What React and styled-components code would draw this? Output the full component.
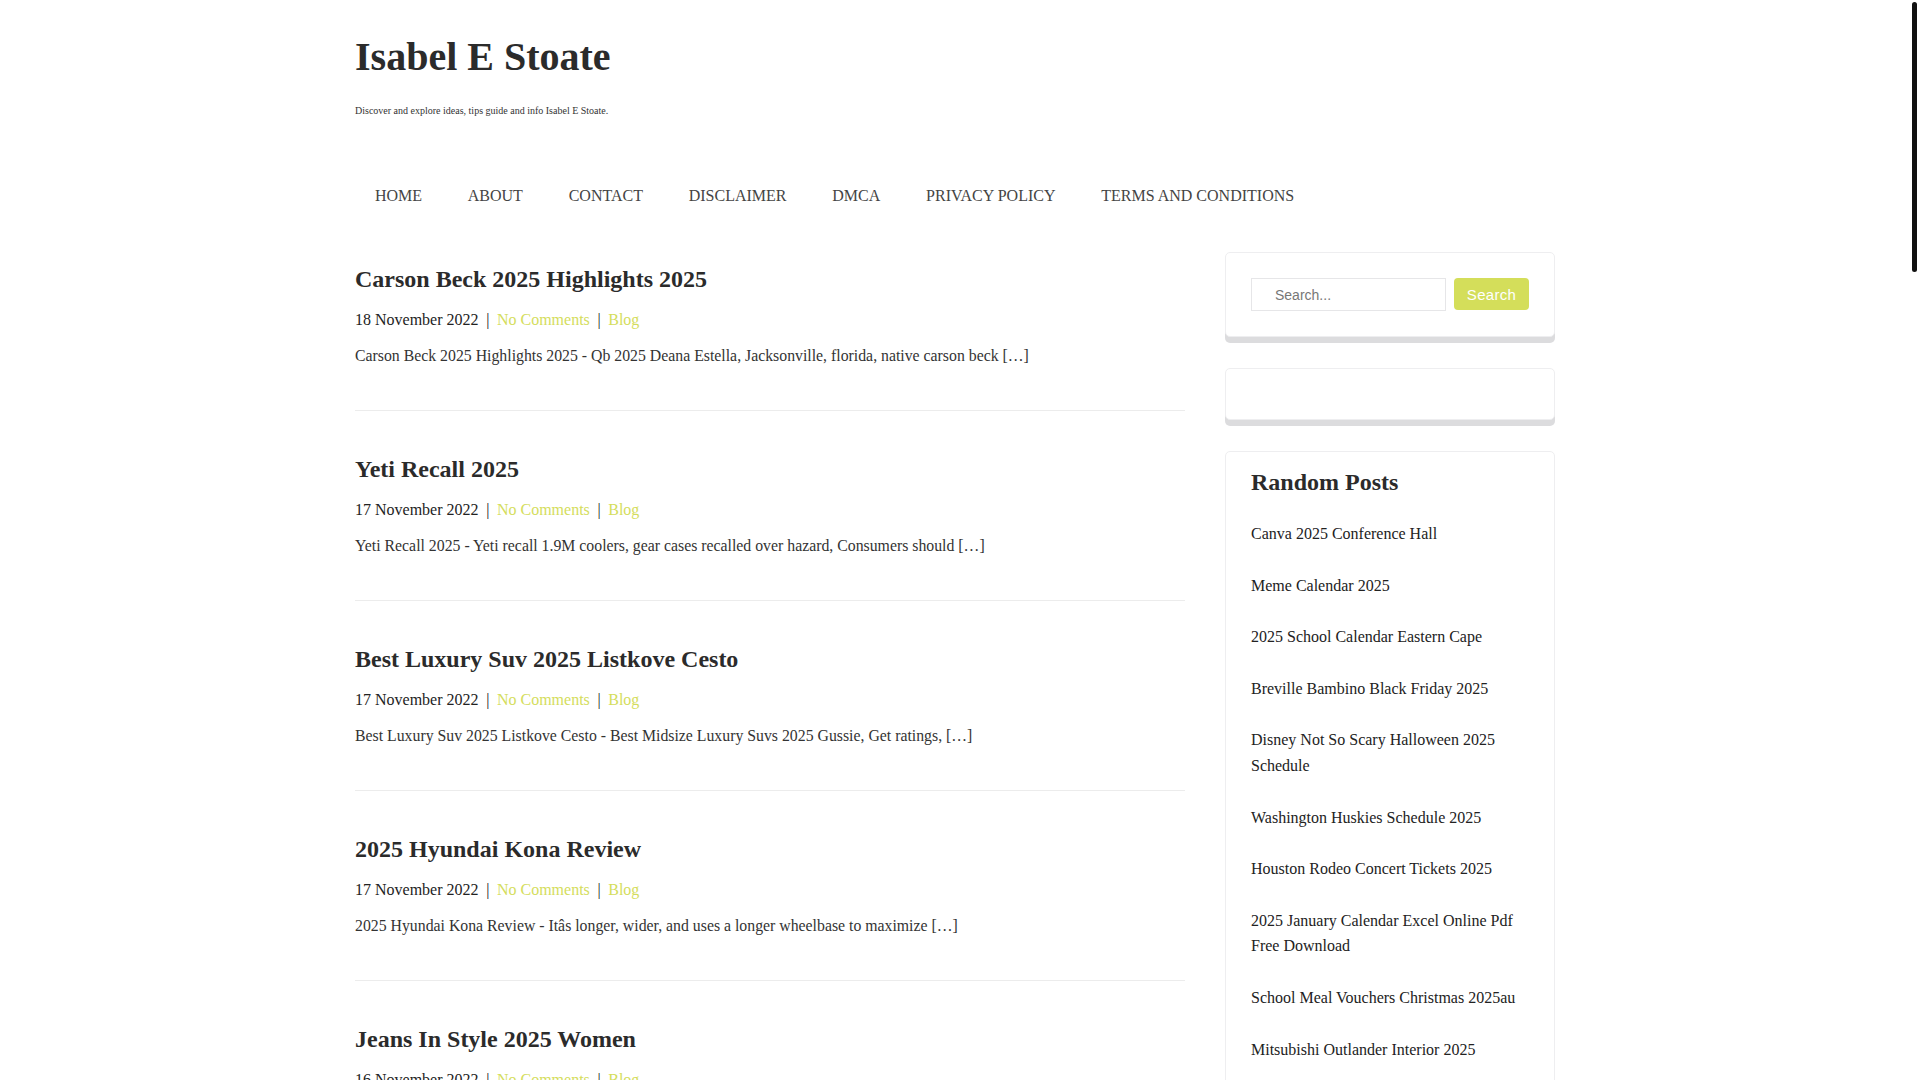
import React from "react";
import styled, { createGlobalStyle } from "styled-components";

const posts = [
  {
    title: "Carson Beck 2025 Highlights 2025",
    date: "18 November 2022",
    excerpt:
      "Carson Beck 2025 Highlights 2025 - Qb 2025 Deana Estella, Jacksonville, florida, native carson beck […]",
  },
  {
    title: "Yeti Recall 2025",
    date: "17 November 2022",
    excerpt:
      "Yeti Recall 2025 - Yeti recall 1.9M coolers, gear cases recalled over hazard, Consumers should […]",
  },
  {
    title: "Best Luxury Suv 2025 Listkove Cesto",
    date: "17 November 2022",
    excerpt:
      "Best Luxury Suv 2025 Listkove Cesto - Best Midsize Luxury Suvs 2025 Gussie, Get ratings, […]",
  },
  {
    title: "2025 Hyundai Kona Review",
    date: "17 November 2022",
    excerpt:
      "2025 Hyundai Kona Review - Itâs longer, wider, and uses a longer wheelbase to maximize […]",
  },
  {
    title: "Jeans In Style 2025 Women",
    date: "16 November 2022",
    excerpt:
      "Jeans In Style 2025 Women - Discover the latest denim trends, from wide leg to straight fits […]",
  },
  {
    title: "Cadillac Escalade 2025 Price",
    date: "16 November 2022",
    excerpt:
      "Cadillac Escalade 2025 Price - The full size luxury suv returns with new trims and features […]",
  },
  {
    title: "Nfl Draft Order 2025 Round 1",
    date: "16 November 2022",
    excerpt:
      "Nfl Draft Order 2025 Round 1 - See the complete first round order and every team pick […]",
  },
  {
    title: "Printable 2025 Calendar With Holidays",
    date: "15 November 2022",
    excerpt:
      "Printable 2025 Calendar With Holidays - Free monthly and yearly templates to download […]",
  },
];

const randomPosts = [
  "Canva 2025 Conference Hall",
  "Meme Calendar 2025",
  "2025 School Calendar Eastern Cape",
  "Breville Bambino Black Friday 2025",
  "Disney Not So Scary Halloween 2025 Schedule",
  "Washington Huskies Schedule 2025",
  "Houston Rodeo Concert Tickets 2025",
  "2025 January Calendar Excel Online Pdf Free Download",
  "School Meal Vouchers Christmas 2025au",
  "Mitsubishi Outlander Interior 2025",
  "Lsu Football Schedule 2025",
  "Chevy Silverado 2025 Changes",
];

const menu = [
  "HOME",
  "ABOUT",
  "CONTACT",
  "DISCLAIMER",
  "DMCA",
  "PRIVACY POLICY",
  "TERMS AND CONDITIONS",
];

export default function App() {
  return (
    <>
      <GlobalStyle />
      <ScrollThumb aria-hidden="true" />
      <Page>
        <Header>
          <SiteTitle>Isabel E Stoate</SiteTitle>
          <Tagline>
            Discover and explore ideas, tips guide and info Isabel E Stoate.
          </Tagline>
          <Nav>
            {menu.map((item) => (
              <NavLink key={item} href="#">
                {item}
              </NavLink>
            ))}
          </Nav>
        </Header>

        <Content>
          <Main>
            {posts.map((post) => (
              <Article key={post.title}>
                <PostTitle>{post.title}</PostTitle>
                <Meta>
                  <span>{post.date}</span>
                  <Sep>|</Sep>
                  <MetaLink href="#">No Comments</MetaLink>
                  <Sep>|</Sep>
                  <MetaLink href="#">Blog</MetaLink>
                </Meta>
                <Excerpt>{post.excerpt}</Excerpt>
              </Article>
            ))}
          </Main>

          <Sidebar>
            <Widget>
              <SearchForm onSubmit={(e) => e.preventDefault()}>
                <SearchInput type="text" placeholder="Search..." />
                <SearchButton type="submit">Search</SearchButton>
              </SearchForm>
            </Widget>
            <Widget />
            <Widget $compact>
              <WidgetTitle>Random Posts</WidgetTitle>
              <PostList>
                {randomPosts.map((p) => (
                  <PostItem key={p}>
                    <a href="#">{p}</a>
                  </PostItem>
                ))}
              </PostList>
            </Widget>
          </Sidebar>
        </Content>
      </Page>
    </>
  );
}

const GlobalStyle = createGlobalStyle`
  html {
    background: #fff;
    scrollbar-width: none;
  }
  html::-webkit-scrollbar {
    display: none;
  }
  body {
    margin: 0;
    padding-right: 10px;
    background: #fff;
    color: #333;
    font-family: "Liberation Serif", "Times New Roman", serif;
  }
  a {
    text-decoration: none;
    color: inherit;
  }
`;

/* thin page scrollbar thumb seen at the right edge */
const ScrollThumb = styled.div`
  position: fixed;
  top: 2px;
  right: 3px;
  width: 5px;
  height: 270px;
  border-radius: 3px;
  background: #111;
  z-index: 10;
`;

const Page = styled.div`
  width: 1200px;
  margin: 0 auto;
`;

const Header = styled.header`
  padding-top: 33px;
`;

const SiteTitle = styled.h1`
  margin: 0;
  font-size: 40px;
  line-height: 48px;
  font-weight: 700;
  color: #2b2b2b;
`;

const Tagline = styled.p`
  margin: 22px 0 0;
  font-size: 10px;
  line-height: 15px;
  color: #333;
`;

const Nav = styled.nav`
  display: flex;
  margin: 66px 0 0 -3px;
`;

const NavLink = styled.a`
  padding: 0 22.9px;
  font-size: 16px;
  line-height: 24px;
  color: #444;
`;

const Content = styled.div`
  display: grid;
  grid-template-columns: 830px 330px;
  justify-content: space-between;
  align-items: start;
  margin-top: 44px;
`;

const Main = styled.main`
  display: flex;
  flex-direction: column;
`;

const Article = styled.article`
  padding: 13px 0 42px;
  margin-bottom: 31px;
  border-bottom: 1px solid #ececec;
`;

const PostTitle = styled.h2`
  margin: 0;
  font-size: 24px;
  line-height: 29px;
  font-weight: 700;
  color: #2b2b2b;
`;

const Meta = styled.div`
  margin-top: 14px;
  font-size: 16px;
  line-height: 24px;
  color: #222;
`;

const Sep = styled.span`
  margin: 0 7.6px;
`;

const MetaLink = styled.a`
  color: #d4dd5c;
`;

const Excerpt = styled.p`
  margin: 12px 0 0;
  font-size: 15.8px;
  line-height: 24px;
  color: #333;
`;

const Sidebar = styled.aside`
  display: flex;
  flex-direction: column;
  gap: 31px;
`;

const Widget = styled.section`
  padding: ${(p) => (p.$compact ? "16px 25px 25px" : "25px")};
  border: 1px solid #eeeef0;
  border-radius: 5px;
  background: #fff;
  box-shadow: 0 6px 0 #dcdcde;
`;

const SearchForm = styled.form`
  display: flex;
  gap: 8px;
  align-items: flex-start;
`;

const SearchInput = styled.input`
  box-sizing: border-box;
  width: 195px;
  height: 33px;
  padding: 0 0 0 23px;
  border: 1px solid #e6e6e8;
  outline: none;
  font-family: "Liberation Sans", Arial, sans-serif;
  font-size: 14px;
  color: #555;
  &::placeholder {
    color: #777;
  }
`;

const SearchButton = styled.button`
  width: 76px;
  height: 32px;
  padding: 0;
  border: none;
  border-radius: 4px;
  background: #d4de5a;
  color: #fff;
  font-family: "Liberation Sans", Arial, sans-serif;
  font-size: 15px;
  letter-spacing: 0.3px;
  cursor: pointer;
`;

const WidgetTitle = styled.h3`
  margin: 0 0 24px;
  font-size: 24px;
  line-height: 29px;
  font-weight: 700;
  color: #2b2b2b;
`;

const PostList = styled.ul`
  list-style: none;
  margin: 0;
  padding: 0;
`;

const PostItem = styled.li`
  padding-bottom: 26px;
  font-size: 16px;
  line-height: 25.6px;
  color: #222;
`;
